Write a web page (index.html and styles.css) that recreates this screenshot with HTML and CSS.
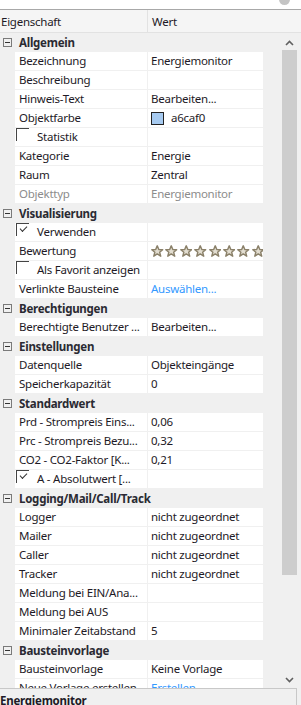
FILE: index.html
```html
<!DOCTYPE html>
<html lang="de">
<head>
  <meta charset="UTF-8" />
  <title>Eigenschaften</title>
  <link rel="stylesheet" href="styles.css">
</head>
<body>
  <div class="search"><span class="clear"></span></div>

  <div class="head">
    <div class="hname">Eigenschaft</div>
    <div class="hval">Wert</div>
  </div>

  <div class="panel">
    <div class="grid">
      <div class="cat"><span class="exp"></span>Allgemein</div>
      <div class="row"><div class="name">Bezeichnung</div><div class="val">Energiemonitor</div></div>
      <div class="row"><div class="name">Beschreibung</div><div class="val"></div></div>
      <div class="row"><div class="name">Hinweis-Text</div><div class="val">Bearbeiten...</div></div>
      <div class="row"><div class="name">Objektfarbe</div><div class="val"><span class="swatch"></span>a6caf0</div></div>
      <div class="row"><div class="name chk"><span class="box"></span>Statistik</div><div class="val"></div></div>
      <div class="row"><div class="name">Kategorie</div><div class="val">Energie</div></div>
      <div class="row"><div class="name">Raum</div><div class="val">Zentral</div></div>
      <div class="row dim"><div class="name">Objekttyp</div><div class="val">Energiemonitor</div></div>

      <div class="cat"><span class="exp"></span>Visualisierung</div>
      <div class="row"><div class="name chk"><span class="box on"></span>Verwenden</div><div class="val"></div></div>
      <div class="row"><div class="name">Bewertung</div><div class="val stars" id="stars"></div></div>
      <div class="row"><div class="name chk"><span class="box"></span>Als Favorit anzeigen</div><div class="val"></div></div>
      <div class="row"><div class="name">Verlinkte Bausteine</div><div class="val link">Auswählen...</div></div>

      <div class="cat"><span class="exp"></span>Berechtigungen</div>
      <div class="row"><div class="name">Berechtigte Benutzer ...</div><div class="val">Bearbeiten...</div></div>

      <div class="cat"><span class="exp"></span>Einstellungen</div>
      <div class="row"><div class="name">Datenquelle</div><div class="val">Objekteingänge</div></div>
      <div class="row"><div class="name">Speicherkapazität</div><div class="val">0</div></div>

      <div class="cat"><span class="exp"></span>Standardwert</div>
      <div class="row"><div class="name">Prd - Strompreis Eins...</div><div class="val">0,06</div></div>
      <div class="row"><div class="name">Prc - Strompreis Bezu...</div><div class="val">0,32</div></div>
      <div class="row"><div class="name">CO2 - CO2-Faktor [K...</div><div class="val">0,21</div></div>
      <div class="row"><div class="name chk"><span class="box on"></span>A - Absolutwert [...</div><div class="val"></div></div>

      <div class="cat"><span class="exp"></span>Logging/Mail/Call/Track</div>
      <div class="row"><div class="name">Logger</div><div class="val">nicht zugeordnet</div></div>
      <div class="row"><div class="name">Mailer</div><div class="val">nicht zugeordnet</div></div>
      <div class="row"><div class="name">Caller</div><div class="val">nicht zugeordnet</div></div>
      <div class="row"><div class="name">Tracker</div><div class="val">nicht zugeordnet</div></div>
      <div class="row"><div class="name">Meldung bei EIN/Ana...</div><div class="val"></div></div>
      <div class="row"><div class="name">Meldung bei AUS</div><div class="val"></div></div>
      <div class="row"><div class="name">Minimaler Zeitabstand</div><div class="val">5</div></div>

      <div class="cat"><span class="exp"></span>Bausteinvorlage</div>
      <div class="row"><div class="name">Bausteinvorlage</div><div class="val">Keine Vorlage</div></div>
      <div class="row"><div class="name">Neue Vorlage erstellen</div><div class="val link">Erstellen...</div></div>
    </div>

    <div class="scroll">
      <svg class="arrow" viewBox="0 0 9 6"><path d="M1 5 L4.5 1.5 L8 5" fill="none" stroke="#606060" stroke-width="1.6"/></svg>
      <div class="thumb"></div>
      <svg class="arrow" viewBox="0 0 9 6"><path d="M1 1 L4.5 4.5 L8 1" fill="none" stroke="#606060" stroke-width="1.6"/></svg>
    </div>
  </div>

  <div class="footer">Energiemonitor</div>

  <script>
    // Sterne fuer die Bewertung
    const stars = document.getElementById('stars');
    for (let i = 0; i < 9; i++) {
      stars.innerHTML += `
        <svg viewBox="0 0 12 12" aria-hidden="true">
          <polygon points="6,0.8 7.5,4.3 11.2,4.5 8.3,6.9 9.3,10.7 6,8.6 2.7,10.7 3.7,6.9 0.8,4.5 4.5,4.3"></polygon>
        </svg>`;
    }
  </script>
</body>
</html>
```

FILE: styles.css
```css
* {
  box-sizing: border-box;
}

html, body {
  margin: 0;
  height: 100%;
  overflow: hidden;
  font-family: 'Noto Sans', sans-serif;
  font-size: 11.5px;
  letter-spacing: -0.25px;
  color: #1e1a26;
  background: #f0f0f0;
}

.search {
  height: 10px;
  background: #fff;
  border-bottom: 1px solid #a8a8a8;
  position: relative;
}

.search .clear {
  position: absolute;
  right: 11px;
  top: -6px;
  width: 11px;
  height: 11px;
  border-radius: 50%;
  background: #c4c4c4;
}

/* Kopfzeile */
.head {
  display: flex;
  height: 23px;
  background: #f5f5f5;
  border-bottom: 1px solid #e2e2e2;
  line-height: 24px;
}

.hname {
  width: 148px;
  padding-left: 1px;
  border-right: 1px solid #e2e2e2;
}

.hval {
  padding-left: 4px;
}

.panel {
  display: flex;
  height: 655px;
  overflow: hidden;
}

.grid {
  width: 263px;
  flex-shrink: 0;
}

.cat {
  display: flex;
  align-items: center;
  height: 19px;
  font-weight: 700;
  color: #2a2a32;
  white-space: nowrap;
  overflow: hidden;
}

.exp {
  position: relative;
  width: 9px;
  height: 9px;
  margin: 0 7px 0 3px;
  border: 1px solid #7a7a7a;
  flex-shrink: 0;
}

.exp::after {
  content: '';
  position: absolute;
  left: 1px;
  right: 1px;
  top: 3px;
  height: 1px;
  background: #333;
}

.row {
  display: flex;
  height: 19px;
  line-height: 18px;
  white-space: nowrap;
}

.row .name,
.row .val {
  background: #fff;
  border-bottom: 1px solid #f0f0f0;
  overflow: hidden;
}

.row .name {
  width: 133px;
  margin-left: 15px;
  padding-left: 4px;
  border-right: 1px solid #f0f0f0;
}

.row .val {
  flex: 1;
  padding-left: 3px;
  display: flex;
  align-items: center;
}

.row.dim .name,
.row.dim .val {
  color: #8c8c8c;
}

.link {
  color: #3399ff;
}

.name.chk {
  display: flex;
  align-items: flex-start;
  padding-left: 1px;
}

.box {
  position: relative;
  width: 13px;
  height: 13px;
  margin: 0 8px 0 0;
  border-top: 1px solid #444;
  border-left: 1px solid #444;
  flex-shrink: 0;
}

.box.on::after {
  content: '';
  position: absolute;
  left: 3px;
  top: 2px;
  width: 6px;
  height: 3px;
  border-left: 1.5px solid #333;
  border-bottom: 1.5px solid #333;
  transform: rotate(-45deg);
}

.swatch {
  width: 13px;
  height: 13px;
  margin-right: 7px;
  background: #a6caf0;
  border: 1px solid #222;
}

.stars {
  padding-left: 3px;
}

.stars svg {
  width: 12.5px;
  height: 12.5px;
  margin-right: 1.9px;
  flex-shrink: 0;
}

.stars polygon {
  fill: #e2ddd0;
  stroke: #8a8069;
  stroke-width: 1.4;
  stroke-linejoin: round;
}

/* Bildlaufleiste */
.scroll {
  width: 15px;
  margin-left: 19px;
  display: flex;
  flex-direction: column;
  align-items: center;
}

.arrow {
  width: 9px;
  height: 6px;
  margin: 7px 0 4px;
}

.thumb {
  width: 15px;
  height: 525px;
  background: #cdcdcd;
  margin-bottom: 95px;
}

.footer {
  height: 17px;
  margin-right: 4px;
  border-top: 1px solid #c8c8c8;
  border-right: 1px solid #c8c8c8;
  font-weight: 700;
  padding-top: 3px;
  line-height: 18px;
  color: #1e1a26;
}
```
